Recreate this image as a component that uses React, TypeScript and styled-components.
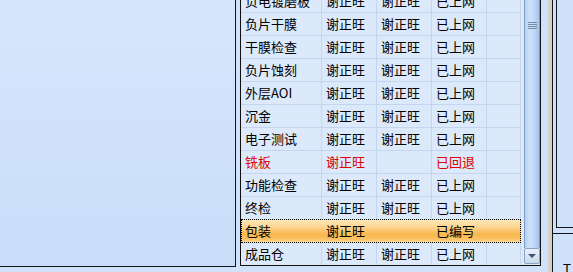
import * as React from 'react'
import styled, { createGlobalStyle, css } from 'styled-components'

const GlobalStyle = createGlobalStyle`
  html, body {
    margin: 0;
    padding: 0;
    background: #d0e2fa;
    font-family: "Noto Sans CJK SC", "Noto Sans", sans-serif;
  }
`

const Screen = styled.div`
  display: flex;
  width: 573px;
  height: 272px;
  overflow: hidden;
  background: #d0e2fa;
`

const NavPanel = styled.div`
  width: 235px;
  height: 266px;
  flex: none;
  border-right: 1px solid #151515;
  border-bottom: 1px solid #151515;
  background: linear-gradient(to bottom, #d6e6fc, #c9ddf9);
`

const GridFrame = styled.div`
  margin-left: 4px;
  width: 299px;
  height: 265px;
  flex: none;
  display: flex;
  border: 1px solid #101010;
  border-top: none;
  background: #dce9fb;
`

const Viewport = styled.div`
  flex: 1;
  overflow: hidden;
`

// list is scrolled a little, so the first row shows only its lower half
const RowList = styled.div`
  margin-top: -10px;
`

const columns = '81px 55px 55px 55px 34px'

const Row = styled.div<{ $active?: boolean }>`
  position: relative;
  display: grid;
  grid-template-columns: ${columns};
  height: 23px;
  ${(p) =>
    p.$active &&
    css`
      background: linear-gradient(
        to bottom,
        #fde6b6 0%,
        #fcd694 30%,
        #f9b84c 62%,
        #fac062 82%,
        #fde0a4 100%
      );
      &::after {
        content: '';
        position: absolute;
        left: 0;
        right: 0;
        top: -1px;
        bottom: 0;
        border: 1px dotted #000;
        pointer-events: none;
      }
    `}
`

const Cell = styled.div<{ $alert?: boolean; $active?: boolean }>`
  box-sizing: border-box;
  padding-left: 4px;
  border-right: 1px solid ${(p) => (p.$active ? 'transparent' : '#c4d6ef')};
  border-bottom: 1px solid ${(p) => (p.$active ? 'transparent' : '#c4d6ef')};
  font-size: 13px;
  line-height: 22px;
  white-space: nowrap;
  overflow: hidden;
  color: ${(p) => (p.$alert ? '#dd0000' : '#000')};
`

const ScrollBar = styled.div`
  width: 16px;
  margin-left: 3px;
  flex: none;
  display: flex;
  flex-direction: column;
  padding-bottom: 1px;
`

const Thumb = styled.div`
  flex: 1;
  display: flex;
  justify-content: center;
  border-left: 1px solid #7f9cc2;
  border-right: 1px solid #7f9cc2;
  background: linear-gradient(to right, #b4cff3, #cfe1fb 35%, #bcd5f7 70%, #a6c3ec);
`

const Grip = styled.div`
  margin-top: 22px;
  width: 9px;
  height: 7px;
  background: repeating-linear-gradient(to bottom, #7a8ca6 0 1px, transparent 1px 2px);
`

const ArrowButton = styled.div`
  box-sizing: border-box;
  height: 16px;
  display: flex;
  align-items: center;
  justify-content: center;
  border: 1px solid #8aa3c4;
  border-radius: 2px;
  background: linear-gradient(to bottom, #eaf1fb, #cad9ed);
`

const ArrowDown = styled.div`
  width: 0;
  height: 0;
  border-left: 4px solid transparent;
  border-right: 4px solid transparent;
  border-top: 4px solid #44566f;
`

const Splitter = styled.div`
  margin-left: 7px;
  width: 4px;
  height: 272px;
  flex: none;
  background: #d5d1c9;
`

const SidePanel = styled.div`
  flex: 1;
  display: flex;
  flex-direction: column;
  border-left: 1px solid #151515;
`

const TopBox = styled.div`
  height: 227px;
  flex: none;
  margin-left: 3px;
  border-left: 1px solid #151515;
  border-bottom: 1px solid #151515;
`

const BottomBox = styled.div`
  flex: 1;
  margin-top: 5px;
  border-top: 1px solid #151515;
  padding: 28px 0 0 10px;
  font-family: "Liberation Sans", sans-serif;
  font-size: 13px;
  line-height: 13px;
  color: #000;
  overflow: hidden;
`

type Step = {
  name: string
  owner: string
  checker: string
  state: string
  alert?: boolean
  active?: boolean
}

const steps: Step[] = [
  { name: '负电镀磨板', owner: '谢正旺', checker: '谢正旺', state: '已上网' },
  { name: '负片干膜', owner: '谢正旺', checker: '谢正旺', state: '已上网' },
  { name: '干膜检查', owner: '谢正旺', checker: '谢正旺', state: '已上网' },
  { name: '负片蚀刻', owner: '谢正旺', checker: '谢正旺', state: '已上网' },
  { name: '外层AOI', owner: '谢正旺', checker: '谢正旺', state: '已上网' },
  { name: '沉金', owner: '谢正旺', checker: '谢正旺', state: '已上网' },
  { name: '电子测试', owner: '谢正旺', checker: '谢正旺', state: '已上网' },
  { name: '铣板', owner: '谢正旺', checker: '', state: '已回退', alert: true },
  { name: '功能检查', owner: '谢正旺', checker: '谢正旺', state: '已上网' },
  { name: '终检', owner: '谢正旺', checker: '谢正旺', state: '已上网' },
  { name: '包装', owner: '谢正旺', checker: '', state: '已编写', active: true },
  { name: '成品仓', owner: '谢正旺', checker: '谢正旺', state: '已上网' },
]

export default function App() {
  return (
    <>
      <GlobalStyle />
      <Screen>
        <NavPanel />
        <GridFrame>
          <Viewport>
            <RowList>
              {steps.map((s) => (
                <Row key={s.name} $active={s.active}>
                  <Cell $alert={s.alert} $active={s.active}>{s.name}</Cell>
                  <Cell $alert={s.alert} $active={s.active}>{s.owner}</Cell>
                  <Cell $alert={s.alert} $active={s.active}>{s.checker}</Cell>
                  <Cell $alert={s.alert} $active={s.active}>{s.state}</Cell>
                  <Cell $active={s.active} />
                </Row>
              ))}
            </RowList>
          </Viewport>
          <ScrollBar>
            <Thumb>
              <Grip />
            </Thumb>
            <ArrowButton>
              <ArrowDown />
            </ArrowButton>
          </ScrollBar>
        </GridFrame>
        <Splitter />
        <SidePanel>
          <TopBox />
          <BottomBox>T</BottomBox>
        </SidePanel>
      </Screen>
    </>
  )
}
